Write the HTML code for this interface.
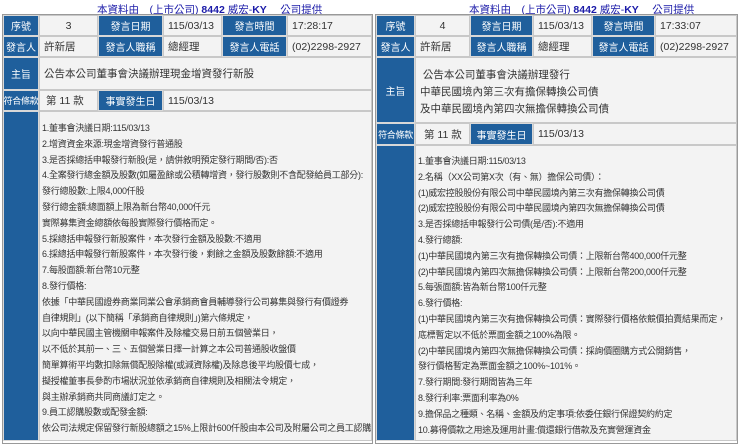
<!DOCTYPE html>
<html><head><meta charset="utf-8"><style>
body{margin:0;width:740px;height:435px;overflow:hidden;background:#fff;font-family:"Liberation Sans","Noto Sans CJK TC",sans-serif;position:relative}
.c{position:absolute;box-sizing:border-box;border:1px solid #c8c8c8;font-size:10.5px;display:flex;align-items:center;background:#f3f3f3;color:#333;padding-left:4px;white-space:nowrap;overflow:hidden}
.h{background:#1f5f9c;color:#fff;justify-content:center;padding:0;border-color:#d8d8d8;font-size:10px}
.n{font-size:9px;letter-spacing:-0.3px}
.ctr{justify-content:center;padding:0}
.t{position:absolute;top:2px;font-size:10.5px;color:#1a1aa8;white-space:nowrap}
.b{position:absolute;font-size:9px;line-height:15.8px;color:#333;white-space:nowrap;letter-spacing:-0.25px}
.box{position:absolute;border:1px solid #999;box-sizing:border-box}
</style></head><body>
<div class="t" style="left:97px">本資料由　(上市公司) <b>8442</b> 威宏-<b>KY</b>　 公司提供</div>
<div class="t" style="left:469px">本資料由　(上市公司) <b>8442</b> 威宏-<b>KY</b>　 公司提供</div>

<!-- left -->
<div class="box" style="left:2px;top:14px;width:371px;height:430px"></div>
<div class="c h" style="left:3px;top:15px;width:36px;height:21px">序號</div>
<div class="c ctr" style="left:39px;top:15px;width:59px;height:21px">3</div>
<div class="c h" style="left:98px;top:15px;width:65px;height:21px">發言日期</div>
<div class="c" style="left:163px;top:15px;width:59px;height:21px">115/03/13</div>
<div class="c h" style="left:222px;top:15px;width:65px;height:21px">發言時間</div>
<div class="c" style="left:287px;top:15px;width:85px;height:21px">17:28:17</div>
<div class="c h" style="left:3px;top:36px;width:36px;height:21px">發言人</div>
<div class="c" style="left:39px;top:36px;width:59px;height:21px">許新居</div>
<div class="c h" style="left:98px;top:36px;width:65px;height:21px">發言人職稱</div>
<div class="c" style="left:163px;top:36px;width:59px;height:21px">總經理</div>
<div class="c h" style="left:222px;top:36px;width:65px;height:21px">發言人電話</div>
<div class="c" style="left:287px;top:36px;width:85px;height:21px">(02)2298-2927</div>
<div class="c h" style="left:3px;top:57px;width:36px;height:33px">主旨</div>
<div class="c" style="left:39px;top:57px;width:333px;height:33px">公告本公司董事會決議辦理現金增資發行新股</div>
<div class="c h n" style="left:3px;top:90px;width:36px;height:21px">符合條款</div>
<div class="c" style="left:39px;top:90px;width:59px;height:21px;padding-left:6px">第 11 款</div>
<div class="c h" style="left:98px;top:90px;width:65px;height:21px">事實發生日</div>
<div class="c" style="left:163px;top:90px;width:209px;height:21px">115/03/13</div>
<div class="c h" style="left:3px;top:111px;width:36px;height:330px"></div>
<div class="c" style="left:39px;top:111px;width:333px;height:330px"></div>
<div class="b" style="left:42px;top:121px">1.董事會決議日期:115/03/13<br>2.增資資金來源:現金增資發行普通股<br>3.是否採總括申報發行新股(是，請併敘明預定發行期間/否):否<br>4.全案發行總金額及股數(如屬盈餘或公積轉增資，發行股數則不含配發給員工部分):<br>發行總股數:上限4,000仟股<br>發行總金額:總面額上限為新台幣40,000仟元<br>實際募集資金總額依每股實際發行價格而定。<br>5.採總括申報發行新股案件，本次發行金額及股數:不適用<br>6.採總括申報發行新股案件，本次發行後，剩餘之金額及股數餘額:不適用<br>7.每股面額:新台幣10元整<br>8.發行價格:<br>依據「中華民國證券商業同業公會承銷商會員輔導發行公司募集與發行有價證券<br>自律規則」(以下簡稱「承銷商自律規則」)第六條規定，<br>以向中華民國主管機關申報案件及除權交易日前五個營業日，<br>以不低於其前一、三、五個營業日擇一計算之本公司普通股收盤價<br>簡單算術平均數扣除無償配股除權(或減資除權)及除息後平均股價七成，<br>擬授權董事長參酌市場狀況並依承銷商自律規則及相關法令規定，<br>與主辦承銷商共同商議訂定之。<br>9.員工認購股數或配發金額:<br>依公司法規定保留發行新股總額之15%上限計600仟股由本公司及附屬公司之員工認購</div>

<!-- right -->
<div class="box" style="left:375px;top:14px;width:363px;height:430px"></div>
<div class="c h" style="left:376px;top:15px;width:39px;height:21px">序號</div>
<div class="c ctr" style="left:415px;top:15px;width:55px;height:21px">4</div>
<div class="c h" style="left:470px;top:15px;width:63px;height:21px">發言日期</div>
<div class="c" style="left:533px;top:15px;width:59px;height:21px">115/03/13</div>
<div class="c h" style="left:592px;top:15px;width:63px;height:21px">發言時間</div>
<div class="c" style="left:655px;top:15px;width:82px;height:21px">17:33:07</div>
<div class="c h" style="left:376px;top:36px;width:39px;height:21px">發言人</div>
<div class="c" style="left:415px;top:36px;width:55px;height:21px">許新居</div>
<div class="c h" style="left:470px;top:36px;width:63px;height:21px">發言人職稱</div>
<div class="c" style="left:533px;top:36px;width:59px;height:21px">總經理</div>
<div class="c h" style="left:592px;top:36px;width:63px;height:21px">發言人電話</div>
<div class="c" style="left:655px;top:36px;width:82px;height:21px">(02)2298-2927</div>
<div class="c h" style="left:376px;top:57px;width:39px;height:66px">主旨</div>
<div class="c" style="left:415px;top:57px;width:322px;height:66px;padding-top:9px;line-height:17px;white-space:normal;display:block">&nbsp;公告本公司董事會決議辦理發行<br>中華民國境內第三次有擔保轉換公司債<br>及中華民國境內第四次無擔保轉換公司債</div>
<div class="c h n" style="left:376px;top:123px;width:39px;height:22px">符合條款</div>
<div class="c" style="left:415px;top:123px;width:55px;height:22px;padding-left:8px">第 11 款</div>
<div class="c h" style="left:470px;top:123px;width:63px;height:22px">事實發生日</div>
<div class="c" style="left:533px;top:123px;width:204px;height:22px">115/03/13</div>
<div class="c h" style="left:376px;top:145px;width:39px;height:296px"></div>
<div class="c" style="left:415px;top:145px;width:322px;height:296px"></div>
<div class="b" style="left:418px;top:154px">1.董事會決議日期:115/03/13<br>2.名稱（XX公司第X次（有、無）擔保公司債）：<br>(1)威宏控股股份有限公司中華民國境內第三次有擔保轉換公司債<br>(2)威宏控股股份有限公司中華民國境內第四次無擔保轉換公司債<br>3.是否採總括申報發行公司債(是/否):不適用<br>4.發行總額:<br>(1)中華民國境內第三次有擔保轉換公司債：上限新台幣400,000仟元整<br>(2)中華民國境內第四次無擔保轉換公司債：上限新台幣200,000仟元整<br>5.每張面額:皆為新台幣100仟元整<br>6.發行價格:<br>(1)中華民國境內第三次有擔保轉換公司債：實際發行價格依競價拍賣結果而定，<br>底標暫定以不低於票面金額之100%為限。<br>(2)中華民國境內第四次無擔保轉換公司債：採詢價圈購方式公開銷售，<br>發行價格暫定為票面金額之100%~101%。<br>7.發行期間:發行期間皆為三年<br>8.發行利率:票面利率為0%<br>9.擔保品之種類、名稱、金額及約定事項:依委任銀行保證契約約定<br>10.募得價款之用途及運用計畫:償還銀行借款及充實營運資金</div>
</body></html>
